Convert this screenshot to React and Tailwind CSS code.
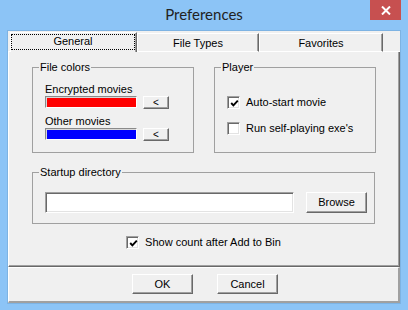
import React from "react"

const raised =
  "bg-[#f0f0f0] border border-t-white border-l-white border-r-[#696969] border-b-[#696969] shadow-[inset_-1px_-1px_0_#a0a0a0]"
const sunken =
  "border border-t-[#a0a0a0] border-l-[#a0a0a0] border-r-white border-b-white shadow-[inset_1px_1px_0_#696969,inset_-1px_-1px_0_#e3e3e3]"

function Button({ className = "", children }) {
  return (
    <div className={`${raised} flex items-center justify-center leading-[13px] ${className}`}>
      {children}
    </div>
  )
}

function Checkbox({ checked, label }) {
  return (
    <div className="flex h-[13px] items-center gap-[6px]">
      <div className={`${sunken} relative h-[13px] w-[13px] shrink-0 bg-white`}>
        {checked && (
          <svg className="absolute left-[2px] top-[2px]" width="9" height="9" viewBox="0 0 9 9">
            <polyline points="1.2,4 3.4,6.4 7.8,1.6" fill="none" stroke="#000" strokeWidth="1.9" />
          </svg>
        )}
      </div>
      <span className="leading-[13px] whitespace-nowrap">{label}</span>
    </div>
  )
}

function ColorRow({ color }) {
  return (
    <div className="flex h-[13px] items-start gap-[6px]">
      <div
        className={`h-[12px] w-[92px] border border-t-[#8a8a8a] border-l-[#8a8a8a] border-r-white border-b-white shadow-[inset_1px_1px_0_#d8d8d8] ${color}`}
      />
      <Button className="h-[13px] w-[26px] text-[10px]">&lt;</Button>
    </div>
  )
}

function Tab({ label, className = "" }) {
  return (
    <div
      className={`h-[19px] border-t border-l border-b border-t-white border-l-white border-b-white border-r border-r-[#696969] shadow-[inset_-1px_0_0_#a0a0a0] pt-[3px] text-center leading-[13px] ${className}`}
    >
      {label}
    </div>
  )
}

export default function App() {
  return (
    <div className="flex h-[310px] w-[408px] flex-col bg-[#8cc4f6] px-[7px] pb-[6px] font-['Liberation_Sans',Arial,sans-serif] text-[11px] text-black">
      {/* title bar */}
      <div className="-mx-[7px] grid h-[30px] grid-cols-[1fr_auto_1fr]">
        <div />
        <div className="pt-[4px] font-['Lato','Open_Sans',sans-serif] text-[15px] leading-[20px] text-[#222]">
          Preferences
        </div>
        <div className="flex justify-end pr-[7px]">
          <div className="flex h-[20px] w-[31px] items-center justify-center bg-[#c75050]">
            <svg width="10" height="9" viewBox="0 0 10 9">
              <path d="M1 0.5 L9 8.5 M9 0.5 L1 8.5" stroke="#fff" strokeWidth="2" />
            </svg>
          </div>
        </div>
      </div>

      {/* client */}
      <div className="flex h-[274px] flex-col border border-[#7db3e3] bg-[#f0f0f0]">
        <div className="h-[1px]" />

        {/* tabs */}
        <div className="flex h-[20px] items-end">
          <div className="h-[1px] w-[2px] bg-white" />
          <div className="h-[20px] w-[127px] border-t border-l border-t-white border-l-white border-r border-r-[#696969] pt-[1px] pr-[1px] shadow-[inset_-1px_0_0_#a0a0a0]">
            <div className="flex h-[16px] justify-center border border-dotted border-black leading-[13px]">
              General
            </div>
          </div>
          <Tab label="File Types" className="w-[122px]" />
          <Tab label="Favorites" className="w-[124px]" />
          <div className="h-[1px] flex-1 bg-white" />
        </div>

        {/* panel */}
        <div className="h-[215px] border-l border-l-white border-r border-r-[#696969] border-b border-b-[#696969] pl-[23px] pt-[9px] shadow-[inset_-1px_-1px_0_#a0a0a0]">
          <div className="flex w-[344px] flex-col">
            <div className="flex gap-[20px]">
              <fieldset className="w-[162px] border border-[#a0a0a0] pb-[11px] pl-[6px]">
                <legend className="px-[1px] leading-[13px]">File colors</legend>
                <div className="ml-[6px] pt-[9px]">
                  <div className="leading-[13px]">Encrypted movies</div>
                  <ColorRow color="bg-[#ff0000]" />
                  <div className="mt-[6px] leading-[13px]">Other movies</div>
                  <ColorRow color="bg-[#0000ff]" />
                </div>
              </fieldset>

              <fieldset className="w-[162px] border border-[#a0a0a0] pl-[6px]">
                <legend className="px-[1px] leading-[13px]">Player</legend>
                <div className="ml-[6px] flex flex-col gap-[13px] pt-[22px]">
                  <Checkbox checked label="Auto-start movie" />
                  <Checkbox label="Run self-playing exe's" />
                </div>
              </fieldset>
            </div>

            <fieldset className="mt-[13px] w-[343px] border border-[#a0a0a0] pb-[10px] pl-[6px]">
              <legend className="px-[1px] leading-[13px]">Startup directory</legend>
              <div className="ml-[6px] flex gap-[12px] pt-[13px]">
                <div className={`${sunken} h-[21px] w-[249px] bg-white`} />
                <Button className="h-[21px] w-[61px]">Browse</Button>
              </div>
            </fieldset>

            <div className="mt-[12px] flex w-[343px] justify-center">
              <Checkbox checked label="Show count after Add to Bin" />
            </div>
          </div>
        </div>

        {/* bottom buttons */}
        <div className="flex h-[36px] justify-center gap-[24px] border-t border-l border-t-white border-l-white border-r-2 border-b-2 border-r-[#a0a0a0] border-b-[#a0a0a0] pl-[3px] pt-[6px]">
          <Button className="h-[20px] w-[61px]">OK</Button>
          <Button className="h-[20px] w-[61px]">Cancel</Button>
        </div>
      </div>
    </div>
  )
}
